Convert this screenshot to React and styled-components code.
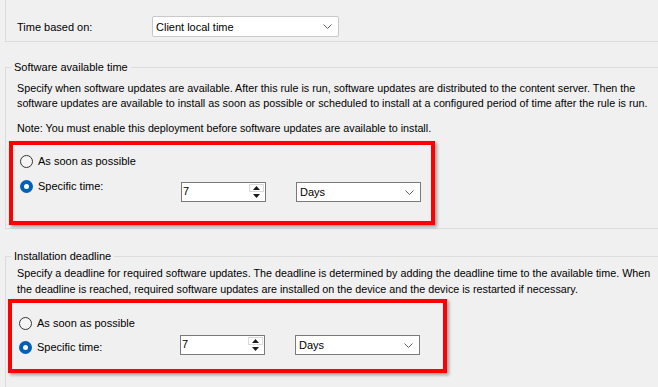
import React from "react";
import styled, { createGlobalStyle } from "styled-components";

const GlobalStyle = createGlobalStyle`
  html, body {
    margin: 0;
    padding: 0;
    background: #f0f0f0;
    overflow: hidden;
  }
  body {
    font-family: "Liberation Sans", Arial, sans-serif;
    font-size: 11px;
    color: #000;
  }
`;

const Page = styled.div`
  width: 658px;
  height: 387px;
  overflow: hidden;
`;

const TopGroup = styled.div`
  margin-left: 5px;
  height: 41px;
  border-left: 1px solid #dcdcdc;
  border-bottom: 1px solid #dcdcdc;
  box-sizing: content-box;
`;

const FieldRow = styled.div`
  display: flex;
  align-items: center;
  padding: 16px 0 0 11px;
`;

const FieldLabel = styled.div`
  width: 135px;
  line-height: 16px;
`;

const Group = styled.fieldset`
  margin: ${(p) => p.$top}px 0 0 5px;
  padding: 0 0 ${(p) => p.$bottom}px 0;
  border: 1px solid #dcdcdc;
  border-right: none;
  min-height: ${(p) => p.$minHeight || 0}px;
`;

const Legend = styled.legend`
  margin-left: 5px;
  padding: 0 3px 0 3px;
  line-height: 16px;
`;

const Text = styled.p`
  margin: ${(p) => p.$top}px 0 0 11px;
  font-size: 10.75px;
  line-height: ${(p) => p.$lh || 15}px;
  white-space: nowrap;
`;

const Highlight = styled.div`
  box-sizing: border-box;
  width: ${(p) => p.$width}px;
  height: ${(p) => p.$height}px;
  margin: ${(p) => p.$top}px 0 0 ${(p) => p.$left}px;
  padding: ${(p) => p.$padTop}px 0 0 7px;
  border: 4px solid #ff0000;
  box-shadow: 2px 2px 3px rgba(0, 0, 0, 0.35);
  display: flex;
  flex-direction: column;
`;

const OptionRow = styled.div`
  display: flex;
  align-items: flex-start;
  height: ${(p) => (p.$controls ? 20 : 16)}px;
  margin-top: ${(p) => p.$top || 0}px;
`;

const OptionLabel = styled.label`
  display: flex;
  align-items: center;
  width: 161px;
  height: 16px;
  line-height: 16px;
  margin-top: ${(p) => p.$dy || 0}px;
`;

const RadioCircle = styled.span`
  box-sizing: border-box;
  width: 13px;
  height: 13px;
  border-radius: 50%;
  margin-right: 5px;
  flex: none;
  display: flex;
  align-items: center;
  justify-content: center;
  border: ${(p) => (p.$checked ? "none" : "1px solid #333")};
  background: ${(p) => (p.$checked ? "#005fb8" : "#f5f5f5")};

  &::after {
    content: "";
    display: ${(p) => (p.$checked ? "block" : "none")};
    width: 5px;
    height: 5px;
    border-radius: 50%;
    background: #fff;
  }
`;

const SpinBox = styled.div`
  box-sizing: border-box;
  width: 85px;
  height: 20px;
  border: 1px solid #7a7a7a;
  background: #fff;
  display: flex;
`;

const SpinValue = styled.div`
  flex: 1;
  padding-left: 1px;
  line-height: 17px;
`;

const SpinButtons = styled.div`
  width: 15px;
  margin: 1px 1px 1px 0;
  display: flex;
  flex-direction: column;
`;

const SpinButton = styled.div`
  flex: 1;
  display: flex;
  align-items: center;
  justify-content: center;
  box-sizing: border-box;
  border: 1px solid ${(p) => (p.$up ? "#dadada" : "transparent")};
  background: #fff;
`;

const ComboBox = styled.div`
  box-sizing: border-box;
  width: ${(p) => p.$width}px;
  height: ${(p) => p.$height}px;
  margin-left: ${(p) => p.$left || 0}px;
  border: 1px solid ${(p) => (p.$light ? "#c9c9c9" : "#7a7a7a")};
  border-radius: ${(p) => (p.$light ? 2 : 0)}px;
  background: #fff;
  display: flex;
  align-items: center;
  justify-content: space-between;
  padding: 0 6px 0 3px;
`;

const Chevron = () => (
  <svg width="9" height="5" viewBox="0 0 9 5">
    <path d="M0.5 0.5 L4.5 4.5 L8.5 0.5" fill="none" stroke="#5f5f5f" strokeWidth="1" />
  </svg>
);

const Arrow = ({ up }) => (
  <svg width="7" height="4" viewBox="0 0 7 4">
    <path d={up ? "M3.5 0 L7 4 L0 4 Z" : "M0 0 L7 0 L3.5 4 Z"} fill="#1a1a1a" />
  </svg>
);

function Radio({ checked, children, dy }) {
  return (
    <OptionLabel $dy={dy}>
      <RadioCircle $checked={checked} />
      {children}
    </OptionLabel>
  );
}

function TimeControls() {
  return (
    <>
      <SpinBox>
        <SpinValue>7</SpinValue>
        <SpinButtons>
          <SpinButton $up>
            <Arrow up />
          </SpinButton>
          <SpinButton>
            <Arrow />
          </SpinButton>
        </SpinButtons>
      </SpinBox>
      <ComboBox $width={125} $height={20} $left={30}>
        Days
        <Chevron />
      </ComboBox>
    </>
  );
}

export default function App() {
  return (
    <Page>
      <GlobalStyle />
      <TopGroup>
        <FieldRow>
          <FieldLabel>Time based on:</FieldLabel>
          <ComboBox $width={187} $height={21} $light>
            Client local time
            <Chevron />
          </ComboBox>
        </FieldRow>
      </TopGroup>

      <Group $top={17} $bottom={3}>
        <Legend>Software available time</Legend>
        <Text $top={6}>
          Specify when software updates are available. After this rule is run, software updates are distributed to the content server. Then the
          <br />
          software updates are available to install as soon as possible or scheduled to install at a configured period of time after the rule is run.
        </Text>
        <Text $top={10}>Note: You must enable this deployment before software updates are available to install.</Text>
        <Highlight $width={426} $height={84} $top={5} $left={3} $padTop={8}>
          <OptionRow>
            <Radio>As soon as possible</Radio>
          </OptionRow>
          <OptionRow $controls $top={13}>
            <Radio checked dy={-4}>
              Specific time:
            </Radio>
            <TimeControls />
          </OptionRow>
        </Highlight>
      </Group>

      <Group $top={19} $bottom={0} $minHeight={200}>
        <Legend>Installation deadline</Legend>
        <Text $top={1} $lh={16}>
          Specify a deadline for required software updates. The deadline is determined by adding the deadline time to the available time. When
          <br />
          the deadline is reached, required software updates are installed on the device and the device is restarted if necessary.
        </Text>
        <Highlight $width={439} $height={74} $top={2} $left={2} $padTop={12}>
          <OptionRow>
            <Radio>As soon as possible</Radio>
          </OptionRow>
          <OptionRow $controls $top={4}>
            <Radio checked dy={4}>
              Specific time:
            </Radio>
            <TimeControls />
          </OptionRow>
        </Highlight>
      </Group>
    </Page>
  );
}
